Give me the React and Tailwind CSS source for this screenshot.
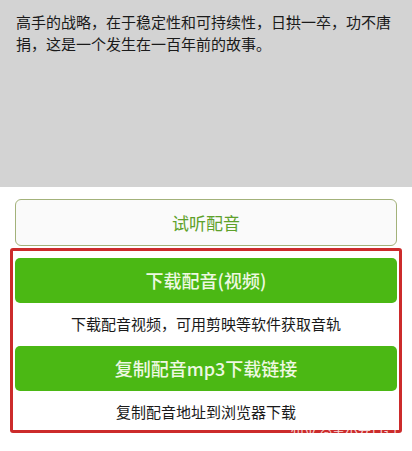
export default function App() {
    const font = { fontFamily: '"Noto Sans CJK SC", "Noto Sans", sans-serif' };
    return (
        <div className="w-[412px] h-[451px] bg-white overflow-hidden" style={font}>
            {/* Zone de texte grise */}
            <div className="h-[187px] bg-[#d3d3d3] px-4 pt-[11px]">
                <p className="text-[15px] leading-[22px] text-[#1a1a1a]">
                    高手的战略，在于稳定性和可持续性，日拱一卒，功不唐捐，这是一个发生在一百年前的故事。
                </p>
            </div>

            <div className="px-[15px] pt-3">
                <button className="w-full h-[47px] rounded-[6px] border border-[#a3b27a] bg-[#fafafa] text-[17px] text-[#5ea12a]">
                    试听配音
                </button>
            </div>

            {/* Cadre rouge */}
            <div className="mx-[10px] mt-[2px] h-[185px] border-[3px] border-[#cc2b2b] rounded-[3px] px-[2px] pt-[7px] relative">
                <button className="w-full h-[45px] rounded-[5px] bg-[#4bb814] text-[18px] font-medium text-[#eef8e2]">
                    下载配音(视频)
                </button>
                <p className="h-[43px] flex items-center justify-center text-[15px] text-[#1a1a1a]">
                    下载配音视频，可用剪映等软件获取音轨
                </p>
                <button className="w-full h-[45px] rounded-[5px] bg-[#4bb814] text-[18px] font-medium text-[#eef8e2]">
                    复制配音mp3下载链接
                </button>
                <p className="h-[42px] flex items-center justify-center text-[15px] text-[#1a1a1a]">
                    复制配音地址到浏览器下载
                </p>
                <span className="absolute right-[2px] bottom-[-9px] text-[13px] text-white opacity-80 leading-none">
                    知乎 @美少女日记
                </span>
            </div>
        </div>
    );
}
